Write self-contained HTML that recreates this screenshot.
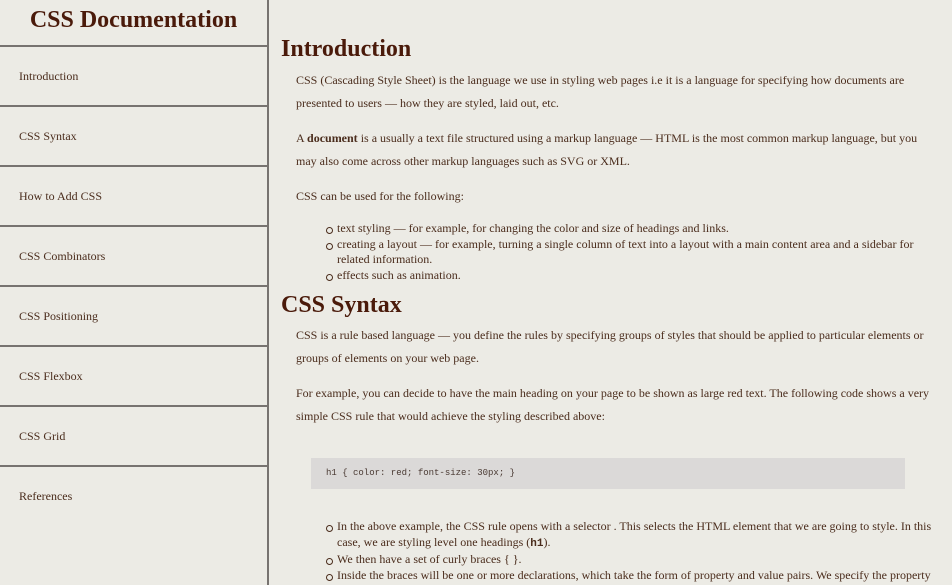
<!DOCTYPE html>
<html><head><meta charset="utf-8"><style>
*{margin:0;padding:0;box-sizing:border-box}
body{width:952px;height:585px;overflow:hidden;background:#ecebe5;font-family:"Liberation Serif",serif;color:#4a2c1c;position:relative}
#side{position:absolute;left:0;top:0;width:269px;height:585px;border-right:2px solid #777370}
#side h1{height:47px;border-bottom:2px solid #777370;text-align:center;font-size:24px;line-height:40px;color:#4a1a0a;font-weight:bold}
.nav{height:60px;border-bottom:2px solid #777370;font-size:12px;line-height:58px;padding-left:19px}
.a{position:absolute;font-size:12px;white-space:nowrap}
.p{left:296px;line-height:23px}
.h{left:281px;font-size:24px;font-weight:bold;color:#4a1a0a;line-height:30px}
ul{position:absolute;left:337px;width:600px;font-size:12px;line-height:15.5px;list-style:none}
li{position:relative}
li:before{content:"";position:absolute;left:-11px;top:6px;width:5px;height:5px;border:1px solid #4a2c1c;border-radius:50%}
.code{position:absolute;left:311px;top:458px;width:594px;height:31px;background:#dbd9d8;font-family:"Liberation Mono",monospace;font-size:9px;line-height:31px;padding-left:15px;color:#4a3a33}
</style></head><body>
<div id="side"><h1>CSS Documentation</h1>
<div class="nav">Introduction</div><div class="nav">CSS Syntax</div><div class="nav">How to Add CSS</div><div class="nav">CSS Combinators</div><div class="nav">CSS Positioning</div><div class="nav">CSS Flexbox</div><div class="nav">CSS Grid</div><div class="nav" style="border:none">References</div></div>
<div class="a h" style="top:34px">Introduction</div>
<div class="a p" style="top:69px">CSS (Cascading Style Sheet) is the language we use in styling web pages i.e it is a language for specifying how documents are<br>presented to users — how they are styled, laid out, etc.</div>
<div class="a p" style="top:127px">A <b>document</b> is a usually a text file structured using a markup language — HTML is the most common markup language, but you<br>may also come across other markup languages such as SVG or XML.</div>
<div class="a p" style="top:185px">CSS can be used for the following:</div>
<ul style="top:221px"><li>text styling — for example, for changing the color and size of headings and links.</li><li>creating a layout — for example, turning a single column of text into a layout with a main content area and a sidebar for<br>related information.</li><li>effects such as animation.</li></ul>
<div class="a h" style="top:290px">CSS Syntax</div>
<div class="a p" style="top:324px">CSS is a rule based language — you define the rules by specifying groups of styles that should be applied to particular elements or<br>groups of elements on your web page.</div>
<div class="a p" style="top:382px">For example, you can decide to have the main heading on your page to be shown as large red text. The following code shows a very<br>simple CSS rule that would achieve the styling described above:</div>
<div class="code">h1 { color: red; font-size: 30px; }</div>
<ul style="top:519px"><li>In the above example, the CSS rule opens with a selector . This selects the HTML element that we are going to style. In this<br>case, we are styling level one headings (<b style="font-family:'Liberation Mono',monospace;font-size:11px">h1</b>).</li><li>We then have a set of curly braces { }.</li><li>Inside the braces will be one or more declarations, which take the form of property and value pairs. We specify the property</li></ul>
</body></html>
